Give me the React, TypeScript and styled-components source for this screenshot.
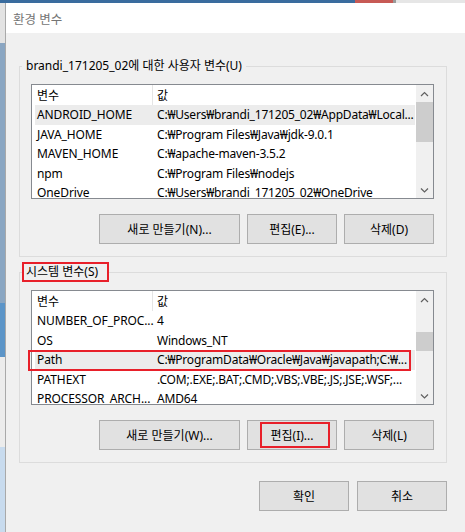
import React from "react";
import styled, { createGlobalStyle } from "styled-components";

const GlobalStyle = createGlobalStyle`
  html, body { margin: 0; padding: 0; background: #f0f0f0; }
  body {
    font-family: "Noto Sans", "Noto Sans CJK KR", sans-serif;
    font-size: 12px;
    color: #000;
    overflow: hidden;
  }
  * { box-sizing: border-box; }
`;

const Screen = styled.div`
  width: 465px;
  height: 532px;
  display: flex;
  flex-direction: column;
  overflow: hidden;
`;

const BehindTitle = styled.div`
  display: flex;
  height: 3px;
  flex: none;
`;

const TitleSeg = styled.div<{ $w?: number; $c: string }>`
  ${(p) => (p.$w ? `width: ${p.$w}px; flex: none;` : "flex: 1;")}
  background: ${(p) => p.$c};
`;

const Main = styled.div`
  display: flex;
  flex: 1;
  min-height: 0;
`;

const LeftStrip = styled.div`
  width: 6px;
  flex: none;
  display: flex;
  flex-direction: column;
  border-right: 1px solid #a9a9a9;
`;

const StripSeg = styled.div<{ $h?: number; $c: string }>`
  ${(p) => (p.$h ? `height: ${p.$h}px; flex: none;` : "flex: 1;")}
  background: ${(p) => p.$c};
`;

const Dialog = styled.div`
  flex: 1;
  background: #f0f0f0;
  display: flex;
  flex-direction: column;
  min-width: 0;
`;

const TitleBar = styled.div`
  height: 30px;
  flex: none;
  background: #fff;
  display: flex;
  align-items: center;
  padding-left: 7px;
  color: #747474;
  font-size: 12.5px;
`;

const Body = styled.div`
  display: flex;
  flex-direction: column;
  padding: 23px 0 0 13px;
`;

const Group = styled.fieldset<{ $gap?: number }>`
  width: 428px;
  margin: ${(p) => p.$gap ?? 0}px 0 0 0;
  border: 1px solid #dcdcdc;
  padding: 8px 12px 12px 11px;
  min-width: 0;
`;

const GroupLabel = styled.legend<{ $marked?: boolean }>`
  margin-left: -9px;
  padding: 0 ${(p) => (p.$marked ? 9 : 2)}px 0 2px;
  border: 2px solid ${(p) => (p.$marked ? "#e8202a" : "transparent")};
  line-height: 16px;
  font-size: 12px;
`;

const List = styled.div`
  height: 115px;
  border: 1px solid #868a90;
  background: #fff;
  display: grid;
  grid-template-columns: minmax(0, 1fr) 17px;
  grid-template-rows: minmax(0, 1fr);
  margin-bottom: 15px;
`;

const ListBody = styled.div`
  display: flex;
  flex-direction: column;
  min-width: 0;
  overflow-x: visible;
  overflow-y: clip;
`;

const Header = styled.div`
  height: 20px;
  flex: none;
  display: grid;
  grid-template-columns: 121px 1fr;
`;

const HeaderCell = styled.div<{ $first?: boolean }>`
  display: flex;
  align-items: center;
  padding-left: ${(p) => (p.$first ? 5 : 4)}px;
  border-right: ${(p) => (p.$first ? "1px solid #e5e5e5" : "none")};
`;

const Row = styled.div<{ $selected?: boolean; $marked?: boolean }>`
  position: relative;
  height: 19.5px;
  flex: none;
  margin: 0 1px 0 3px;
  display: grid;
  grid-template-columns: 118px minmax(0, 1fr);
  background: ${(p) => (p.$selected ? "#ececec" : "transparent")};
  ${(p) =>
    p.$marked
      ? `&::after {
          content: "";
          position: absolute;
          left: -7px;
          right: 4px;
          top: 0;
          bottom: -1px;
          border: 2px solid #e8202a;
        }`
      : ""}
`;

const Cell = styled.div<{ $first?: boolean }>`
  display: flex;
  align-items: center;
  padding-left: ${(p) => (p.$first ? 2 : 4)}px;
  white-space: nowrap;
  overflow: ${(p) => (p.$first ? "visible" : "hidden")};
  letter-spacing: ${(p) => (p.$first ? -0.1 : -0.2)}px;
`;

const Scrollbar = styled.div`
  background: #f0f0f0;
  display: flex;
  flex-direction: column;
`;

const ScrollArrow = styled.div`
  height: 17px;
  flex: none;
  display: flex;
  align-items: center;
  justify-content: center;
`;

const Track = styled.div`
  flex: 1;
  display: flex;
  flex-direction: column;
`;

const Thumb = styled.div<{ $top: number; $h: number }>`
  margin-top: ${(p) => p.$top}px;
  height: ${(p) => p.$h}px;
  background: #cdcdcd;
`;

const ButtonRow = styled.div<{ $gap: number }>`
  display: flex;
  justify-content: flex-end;
  gap: ${(p) => p.$gap}px;
`;

const Button = styled.button<{ $w: number; $marked?: boolean }>`
  position: relative;
  width: ${(p) => p.$w}px;
  height: 30px;
  padding: 0;
  background: #e1e1e1;
  border: 1px solid #adadad;
  font: inherit;
  font-size: 12px;
  color: #000;
  ${(p) =>
    p.$marked
      ? `&::after {
          content: "";
          position: absolute;
          left: 12px;
          right: 6px;
          top: 1px;
          bottom: 1px;
          border: 2px solid #e8202a;
        }`
      : ""}
`;

const Footer = styled.div`
  width: 428px;
  margin-top: 18px;
  display: flex;
  justify-content: flex-end;
  gap: 8px;
`;

const Chevron = ({ down }: { down?: boolean }) => (
  <svg width="9" height="6" viewBox="0 0 9 6">
    <polyline
      points={down ? "1,1.5 4.5,5 8,1.5" : "1,5 4.5,1.5 8,5"}
      fill="none"
      stroke="#606060"
      strokeWidth="1.2"
    />
  </svg>
);

type Var = { name: string; value: string; selected?: boolean; marked?: boolean };

const userVars: Var[] = [
  { name: "ANDROID_HOME", value: "C:₩Users₩brandi_171205_02₩AppData₩Local...", selected: true },
  { name: "JAVA_HOME", value: "C:₩Program Files₩Java₩jdk-9.0.1" },
  { name: "MAVEN_HOME", value: "C:₩apache-maven-3.5.2" },
  { name: "npm", value: "C:₩Program Files₩nodejs" },
  { name: "OneDrive", value: "C:₩Users₩brandi_171205_02₩OneDrive" },
];

const sysVars: Var[] = [
  { name: "NUMBER_OF_PROC...", value: "4" },
  { name: "OS", value: "Windows_NT" },
  { name: "Path", value: "C:₩ProgramData₩Oracle₩Java₩javapath;C:₩...", selected: true, marked: true },
  { name: "PATHEXT", value: ".COM;.EXE;.BAT;.CMD;.VBS;.VBE;.JS;.JSE;.WSF;..." },
  { name: "PROCESSOR_ARCH...", value: "AMD64" },
];

const VarList = ({ vars, thumbTop, thumbH }: { vars: Var[]; thumbTop: number; thumbH: number }) => (
  <List>
    <ListBody>
      <Header>
        <HeaderCell $first>변수</HeaderCell>
        <HeaderCell>값</HeaderCell>
      </Header>
      {vars.map((v) => (
        <Row key={v.name} $selected={v.selected} $marked={v.marked}>
          <Cell $first>{v.name}</Cell>
          <Cell>{v.value}</Cell>
        </Row>
      ))}
    </ListBody>
    <Scrollbar>
      <ScrollArrow>
        <Chevron />
      </ScrollArrow>
      <Track>
        <Thumb $top={thumbTop} $h={thumbH} />
      </Track>
      <ScrollArrow>
        <Chevron down />
      </ScrollArrow>
    </Scrollbar>
  </List>
);

export default function App() {
  return (
    <Screen>
      <GlobalStyle />
      <BehindTitle>
        <TitleSeg $w={355} $c="#3a6c9e" />
        <TitleSeg $w={38} $c="#c75a55" />
        <TitleSeg $w={3} $c="#9a9a9a" />
        <TitleSeg $c="#e6e6e6" />
      </BehindTitle>
      <Main>
        <LeftStrip>
          <StripSeg $h={40} $c="#e3e3e3" />
          <StripSeg $h={260} $c="#8aa6c2" />
          <StripSeg $h={54} $c="#5c95c8" />
          <StripSeg $h={90} $c="#ececec" />
          <StripSeg $c="#c8dbee" />
        </LeftStrip>
        <Dialog>
          <TitleBar>환경 변수</TitleBar>
          <Body>
            <Group>
              <GroupLabel>brandi_171205_02에 대한 사용자 변수(U)</GroupLabel>
              <VarList vars={userVars} thumbTop={0} thumbH={40} />
              <ButtonRow $gap={7}>
                <Button $w={141}>새로 만들기(N)...</Button>
                <Button $w={90}>편집(E)...</Button>
                <Button $w={90}>삭제(D)</Button>
              </ButtonRow>
            </Group>
            <Group $gap={5}>
              <GroupLabel $marked>시스템 변수(S)</GroupLabel>
              <VarList vars={sysVars} thumbTop={24} thumbH={19} />
              <ButtonRow $gap={7}>
                <Button $w={141}>새로 만들기(W)...</Button>
                <Button $w={90} $marked>
                  편집(I)...
                </Button>
                <Button $w={90}>삭제(L)</Button>
              </ButtonRow>
            </Group>
            <Footer>
              <Button $w={90}>확인</Button>
              <Button $w={90}>취소</Button>
            </Footer>
          </Body>
        </Dialog>
      </Main>
    </Screen>
  );
}
